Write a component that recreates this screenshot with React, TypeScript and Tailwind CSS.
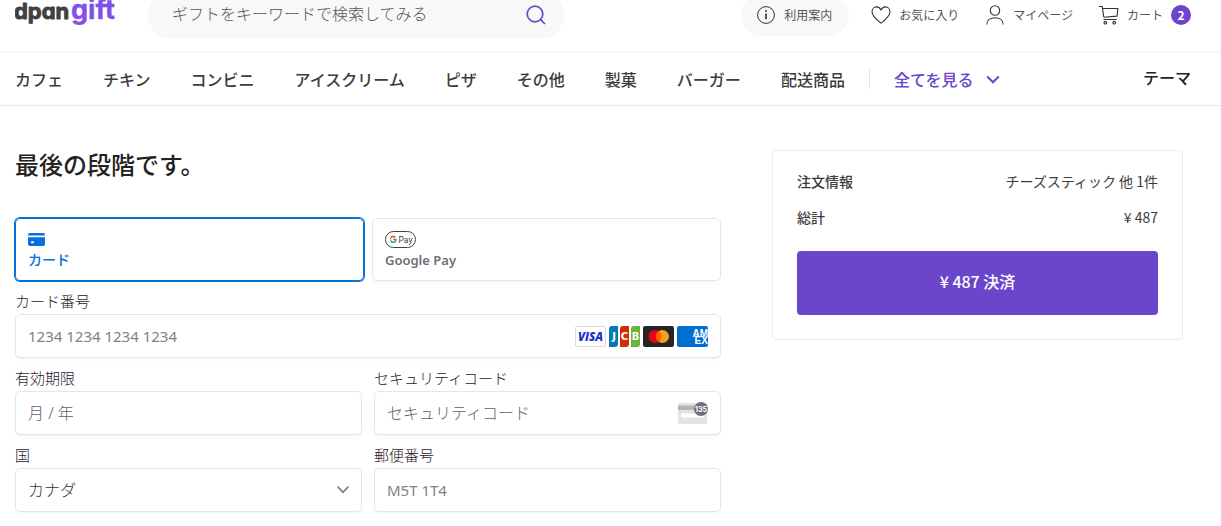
import React, { useState } from 'react';

const categories = [
  'カフェ',
  'チキン',
  'コンビニ',
  'アイスクリーム',
  'ピザ',
  'その他',
  '製菓',
  'バーガー',
  '配送商品',
];

const fieldBox =
  'flex h-11 items-center rounded-[5px] border border-[#e6e6e6] bg-white px-3 shadow-[0_1px_1px_rgba(0,0,0,0.03),0_3px_6px_rgba(0,0,0,0.02)]';
const fieldInput =
  'w-full min-w-0 flex-1 bg-transparent text-[#30313d] outline-none';
const fieldLabel = 'mb-[3px] block text-[15px] leading-5 font-light text-[#1f202b]';

/* ---------- icons ---------- */

function Logo() {
  return (
    <svg
      width="102"
      height="40"
      viewBox="0 0 102 40"
      className="block font-['Inter',sans-serif] font-bold [font-feature-settings:'cv11']"
      strokeLinejoin="round"
      role="img"
      aria-label="dpangift"
    >
      <text x="-1" y="24" fontSize="22" fill="#404040" stroke="#404040" strokeWidth="0.9">dpan</text>
      <text x="56" y="24" fontSize="27" fill="#8250e6" stroke="#8250e6" strokeWidth="0.4">gift</text>
    </svg>
  );
}

function SearchIcon() {
  return (
    <svg width="20" height="20" viewBox="0 0 20 20" fill="none" stroke="#6b46cb" strokeWidth="1.7">
      <circle cx="9" cy="9" r="7.8" />
      <path d="M14.4 14.4 19 19" />
    </svg>
  );
}

function InfoIcon() {
  return (
    <svg width="18" height="18" viewBox="0 0 18 18" fill="none" stroke="#333" strokeWidth="1">
      <circle cx="9" cy="9" r="8.4" />
      <path d="M9 7.5v5.8" strokeWidth="1.7" />
      <circle cx="9" cy="5" r="1" fill="#333" stroke="none" />
    </svg>
  );
}

function HeartIcon() {
  return (
    <svg width="20" height="18" viewBox="0 0 20 18" fill="none" stroke="#333" strokeWidth="1.1" strokeLinejoin="round">
      <path d="M10 17.2C7.6 15.2 1 10.6 1 5.8 1 2.9 3 .9 5.4.9 7.5.9 9.2 2.2 10 4.1 10.8 2.2 12.5.9 14.6.9 17 .9 19 2.9 19 5.8 19 10.6 12.4 15.2 10 17.2Z" />
    </svg>
  );
}

function UserIcon() {
  return (
    <svg width="18" height="20" viewBox="0 0 18 20" fill="none" stroke="#333" strokeWidth="1.1">
      <circle cx="9" cy="5.5" r="4.7" />
      <path d="M.8 19.5c0-4.3 3.6-6.8 8.2-6.8s8.2 2.5 8.2 6.8" />
    </svg>
  );
}

function CartIcon() {
  return (
    <svg width="20" height="20" viewBox="0 0 20 20" fill="none" stroke="#333" strokeWidth="1.1" strokeLinejoin="round">
      <path d="M0 1.5h3.2l1.6 10.7M4.500 14.500h13.200" />
      <path d="M3.6 3.5h15.3l-.9 7.6-13.2 1.1" />
      <circle cx="6.3" cy="17.7" r="1.3" />
      <circle cx="15.2" cy="17.7" r="1.3" />
    </svg>
  );
}

function ChevronDown() {
  return (
    <svg width="14" height="9" viewBox="0 0 14 9" fill="none" stroke="currentColor" strokeWidth="2">
      <path d="M1.2 1.5 7 7.3l5.8-5.8" />
    </svg>
  );
}

function CardIcon() {
  return (
    <svg width="17" height="13" viewBox="0 0 17 13" fill="#0570de">
      <path d="M2 0h13a2 2 0 0 1 2 2v.6H0V2a2 2 0 0 1 2-2Z" />
      <path fillRule="evenodd" d="M0 4.3h17V11a2 2 0 0 1-2 2H2a2 2 0 0 1-2-2Zm4 4a1 1 0 0 0 0 2h1a1 1 0 0 0 0-2Z" />
    </svg>
  );
}

function GooglePayIcon() {
  return (
    <svg width="31" height="17" viewBox="0 0 31 17" fill="none">
      <rect x=".5" y=".5" width="30" height="16" rx="8" fill="#fff" stroke="#3c4043" />
      <g strokeWidth="1.5">
        <path d="M10.3 6.5A2.7 2.7 0 0 0 5.9 7" stroke="#ea4335" />
        <path d="M6 6.8a2.9 2.9 0 0 0 0 3.4" stroke="#fbbc04" />
        <path d="M5.9 10a2.8 2.8 0 0 0 4.3.6" stroke="#34a853" />
        <path d="M8.2 8.5h2.8a2.9 2.9 0 0 1-.9 2.2" stroke="#4285f4" />
      </g>
      <text x="13.5" y="11.5" fontFamily="Roboto, sans-serif" fontSize="8.5" fill="#3c4043">Pay</text>
    </svg>
  );
}

function VisaIcon() {
  return (
    <svg width="31" height="21" viewBox="0 0 31 21">
      <rect x=".5" y=".5" width="30" height="20" rx="1.5" fill="#fff" stroke="#dadada" />
      <text x="15.5" y="14.7" textAnchor="middle" fontFamily="Open Sans, sans-serif" fontWeight="800" fontStyle="italic" fontSize="11.5" fill="#1a34c9">VISA</text>
    </svg>
  );
}

function JcbIcon() {
  return (
    <svg width="31" height="21" viewBox="0 0 31 21">
      <path d="M3 0h6v18a3 3 0 0 1-3 3H0V3a3 3 0 0 1 3-3Z" fill="#047ab1" />
      <path d="M14 0h6v18a3 3 0 0 1-3 3h-6V3a3 3 0 0 1 3-3Z" fill="#d42d06" />
      <path d="M25 0h6v18a3 3 0 0 1-3 3h-6V3a3 3 0 0 1 3-3Z" fill="#67b637" />
      <g fill="#fff" fontFamily="DejaVu Sans, sans-serif" fontWeight="700" fontSize="10" textAnchor="middle">
        <text x="5" y="14">J</text>
        <text x="15.5" y="14">C</text>
        <text x="26.5" y="14">B</text>
      </g>
    </svg>
  );
}

function MastercardIcon() {
  return (
    <svg width="31" height="21" viewBox="0 0 31 21">
      <rect width="31" height="21" rx="2" fill="#252525" />
      <circle cx="12" cy="10.5" r="6.5" fill="#eb001b" />
      <circle cx="19.5" cy="10.5" r="6.5" fill="#f79e1b" />
      <path d="M15.75 5.2a6.5 6.5 0 0 1 0 10.6 6.5 6.5 0 0 1 0-10.6Z" fill="#ff5f00" />
    </svg>
  );
}

function AmexIcon() {
  return (
    <svg width="31" height="21" viewBox="0 0 31 21">
      <rect width="31" height="21" rx="2" fill="#016fd0" />
      <g fill="#fff" fontFamily="Liberation Sans, sans-serif" fontWeight="700" fontSize="10">
        <text x="15.5" y="10.5">AM</text>
        <text x="17.5" y="18">EX</text>
      </g>
    </svg>
  );
}

function CvcIcon() {
  return (
    <svg width="30" height="23" viewBox="0 0 30 23">
      <rect x="0" y="1" width="29" height="21" rx="2" fill="#e3e3e5" />
      <path d="M0 3.5h29V8H0Z" fill="#b5b5b9" />
      <rect x="3" y="11.5" width="23" height="4" fill="#fff" />
      <circle cx="23" cy="7" r="7" fill="#6d6e78" />
      <text x="23" y="9.7" textAnchor="middle" fill="#fff" fontFamily="Inter, sans-serif" fontWeight="700" fontSize="7">135</text>
    </svg>
  );
}

/* ---------- sections ---------- */

function Header() {
  return (
    <header className="overflow-hidden border-b-2 border-[#f7f7f7]">
      <div className="-mt-[9px] mb-3 flex h-12 items-center justify-between pr-[30px] pl-[15px]">
        <div className="flex items-center">
          <a href="#" className="w-[133px]">
            <Logo />
          </a>
          <form className="flex h-12 w-[416px] items-center rounded-full bg-[#f8f8f8] pr-[18px] pl-6" onSubmit={(e) => e.preventDefault()}>
            <input
              type="search"
              aria-label="検索"
              placeholder="ギフトをキーワードで検索してみる"
              className="min-w-0 flex-1 bg-transparent pb-1 text-base font-light outline-none placeholder:text-[#555]"
            />
            <button type="submit" aria-label="検索する">
              <SearchIcon />
            </button>
          </form>
        </div>

        <nav className="flex items-center text-xs text-[#555]">
          <a href="#" className="mr-[22px] flex h-[42px] items-center gap-[9px] rounded-full bg-[#f8f8f8] pr-[17px] pl-4">
            <InfoIcon />
            利用案内
          </a>
          <a href="#" className="mr-[27px] flex items-center gap-2">
            <HeartIcon />
            お気に入り
          </a>
          <a href="#" className="mr-[26px] flex items-center gap-[9px]">
            <UserIcon />
            マイページ
          </a>
          <a href="#" className="flex items-center gap-2">
            <CartIcon />
            カート
            <span className="flex size-5 items-center justify-center rounded-full bg-[#6b46cb] font-bold text-white">2</span>
          </a>
        </nav>
      </div>
    </header>
  );
}

function CategoryNav() {
  return (
    <nav className="flex h-[53px] items-center border-b border-[#eaeaea] pr-[30px] pl-[15px] text-base font-medium whitespace-nowrap text-[#3c3c3c]">
      <ul className="flex items-center gap-10">
        {categories.map((name) => (
          <li key={name}>
            <a href="#">{name}</a>
          </li>
        ))}
      </ul>
      <span className="mx-6 h-5 w-px bg-[#e5e5e5]" />
      <button className="flex items-center gap-3 text-[#6b46cb]">
        全てを見る
        <ChevronDown />
      </button>
      <a href="#" className="ml-auto pb-1 text-[#222]">
        テーマ
      </a>
    </nav>
  );
}

function PaymentForm() {
  const [method, setMethod] = useState<'card' | 'gpay'>('card');
  const tab = 'flex h-[63px] flex-col items-start gap-0.5 rounded-[5px] border px-3 pt-[11px] text-left leading-5';
  const active = 'border-[#0570de] text-[#0570de] shadow-[0_0_0_1px_#0570de]';
  const idle = 'border-[#e6e6e6] text-[#6d6e78] shadow-[0_1px_1px_rgba(0,0,0,0.03),0_3px_6px_rgba(0,0,0,0.02)]';

  return (
    <form className="font-['Noto_Sans','Noto_Sans_CJK_JP',sans-serif]">
      <div className="mb-[10px] grid grid-cols-2 gap-2">
        <button type="button" onClick={() => setMethod('card')} className={`${tab} ${method === 'card' ? active : idle}`}>
          <span className="flex h-[18px] items-center">
            <CardIcon />
          </span>
          <span className="text-sm font-medium">カード</span>
        </button>
        <button type="button" onClick={() => setMethod('gpay')} className={`${tab} ${method === 'gpay' ? active : idle}`}>
          <span className="flex h-[18px] items-center">
            <GooglePayIcon />
          </span>
          <span className="text-[13px] font-semibold">Google Pay</span>
        </button>
      </div>

      <div className="grid grid-cols-2 gap-x-3 gap-y-[10px]">
        <div className="col-span-2">
          <label htmlFor="number" className={fieldLabel}>カード番号</label>
          <div className={fieldBox}>
            <input id="number" placeholder="1234 1234 1234 1234" className={`${fieldInput} text-[15px] placeholder:text-[#808189]`} />
            <div className="flex gap-[3px]">
              <VisaIcon />
              <JcbIcon />
              <MastercardIcon />
              <AmexIcon />
            </div>
          </div>
        </div>

        <div>
          <label htmlFor="expiry" className={fieldLabel}>有効期限</label>
          <div className={fieldBox}>
            <input id="expiry" placeholder="月 / 年" className={`${fieldInput} text-base font-light placeholder:text-[#5f606b]`} />
          </div>
        </div>

        <div>
          <label htmlFor="cvc" className={fieldLabel}>セキュリティコード</label>
          <div className={fieldBox}>
            <input id="cvc" placeholder="セキュリティコード" className={`${fieldInput} text-base font-light placeholder:text-[#5f606b]`} />
            <CvcIcon />
          </div>
        </div>

        <div>
          <label htmlFor="country" className={fieldLabel}>国</label>
          <div className={`${fieldBox} relative`}>
            <select id="country" className={`${fieldInput} appearance-none text-base font-light`} defaultValue="CA">
              <option value="CA">カナダ</option>
              <option value="JP">日本</option>
            </select>
            <svg width="12" height="8" viewBox="0 0 12 8" fill="none" stroke="#6d6e78" strokeWidth="1.6" strokeLinecap="round" strokeLinejoin="round" className="pointer-events-none absolute right-3">
              <path d="M1 1l5 5.3L11 1" />
            </svg>
          </div>
        </div>

        <div>
          <label htmlFor="postal" className={fieldLabel}>郵便番号</label>
          <div className={fieldBox}>
            <input id="postal" placeholder="M5T 1T4" className={`${fieldInput} text-[15px] placeholder:text-[#808189]`} />
          </div>
        </div>
      </div>
    </form>
  );
}

function OrderSummary() {
  return (
    <aside className="self-start rounded border border-[#ebebeb] px-6 pt-5 pb-6 text-sm leading-5 text-[#3c3c3c]">
      <dl className="mb-6 flex flex-col gap-4">
        <div className="flex justify-between">
          <dt className="font-medium">注文情報</dt>
          <dd>チーズスティック 他 1件</dd>
        </div>
        <div className="flex justify-between">
          <dt className="font-medium">総計</dt>
          <dd>¥ 487</dd>
        </div>
      </dl>
      <button className="h-16 w-full rounded bg-[#6b46cb] pb-1 text-base font-medium text-white">¥ 487 決済</button>
    </aside>
  );
}

export default function App() {
  return (
    <div className="min-h-screen bg-white font-['Noto_Sans_CJK_JP',sans-serif]" lang="ja">
      <Header />
      <CategoryNav />
      <main className="grid grid-cols-[minmax(0,706fr)_minmax(0,411fr)] gap-[51px] pt-11 pr-[38px] pl-[15px]">
        <section>
          <h1 className="mb-10 text-2xl leading-7 font-medium text-[#222]">最後の段階です。</h1>
          <PaymentForm />
        </section>
        <OrderSummary />
      </main>
    </div>
  );
}
